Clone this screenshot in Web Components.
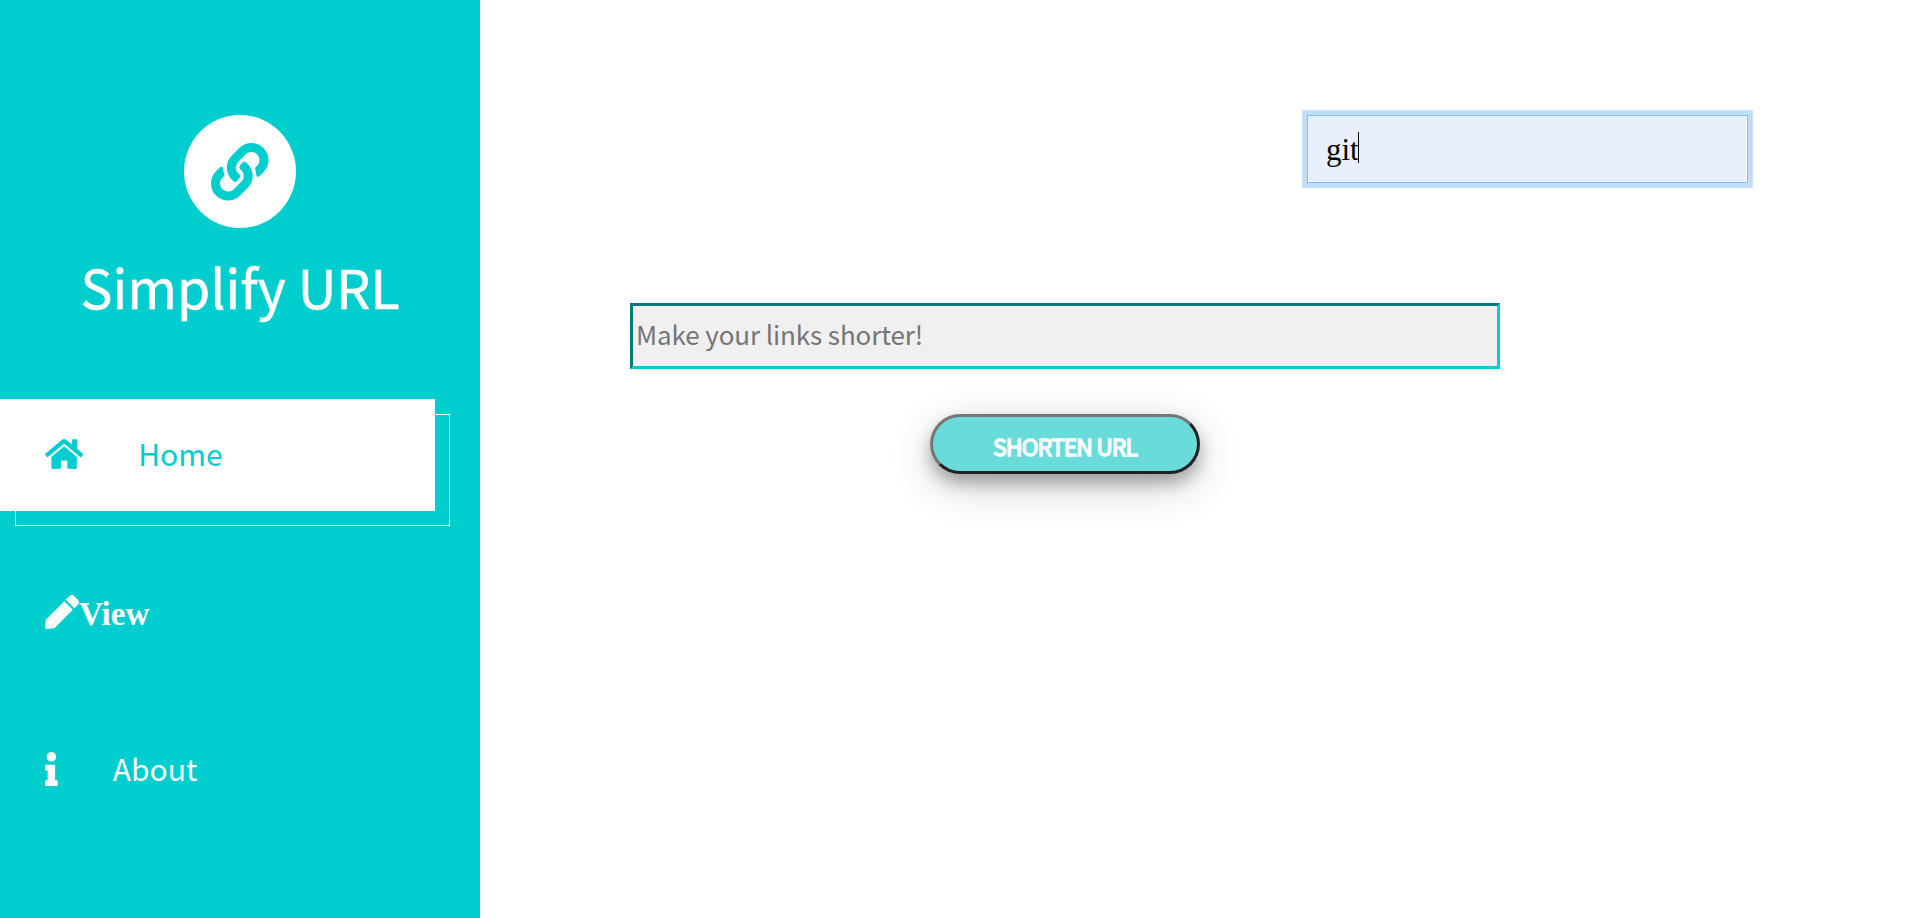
<!DOCTYPE html>
<html lang="en">
<head>
<meta charset="utf-8">
<title>Simplify URL</title>
<style>
html, body { margin: 0; height: 100%; }
body { background: #fff; overflow: hidden; font-family: "Noto Sans CJK SC", sans-serif; }
</style>
</head>
<body>
<url-app></url-app>
<script>
const ICONS = {
  link: [512, "M326.612 185.391c59.747 59.809 58.927 155.698.36 214.59-.11.12-.24.25-.36.37l-67.2 67.2c-59.27 59.27-155.699 59.262-214.96 0-59.27-59.26-59.27-155.7 0-214.96l37.106-37.106c9.84-9.84 26.786-3.3 27.294 10.606.648 17.722 3.826 35.527 9.69 52.721 1.986 5.822.567 12.262-3.783 16.612l-13.087 13.087c-28.026 28.026-28.905 73.66-1.155 101.96 28.024 28.579 74.086 28.749 102.325.51l67.2-67.19c28.191-28.191 28.073-73.757 0-101.83-3.701-3.694-7.429-6.564-10.341-8.569a16.037 16.037 0 0 1-6.947-12.606c-.396-10.567 3.348-21.456 11.698-29.806l21.054-21.055c5.521-5.521 14.182-6.199 20.584-1.731a152.482 152.482 0 0 1 20.522 17.197zM467.547 44.449c-59.261-59.262-155.69-59.27-214.96 0l-67.2 67.2c-.12.12-.25.25-.36.37-58.566 58.892-59.387 154.781.36 214.59a152.454 152.454 0 0 0 20.521 17.196c6.402 4.468 15.064 3.789 20.584-1.731l21.054-21.055c8.35-8.35 12.094-19.239 11.698-29.806a16.037 16.037 0 0 0-6.947-12.606c-2.912-2.005-6.64-4.875-10.341-8.569-28.073-28.073-28.191-73.639 0-101.83l67.2-67.19c28.239-28.239 74.3-28.069 102.325.51 27.75 28.3 26.872 73.934-1.155 101.96l-13.087 13.087c-4.35 4.35-5.769 10.79-3.783 16.612 5.864 17.194 9.042 34.999 9.69 52.721.509 13.906 17.454 20.446 27.294 10.606l37.106-37.106c59.271-59.259 59.271-155.699.001-214.959z"],
  home: [576, "M280.37 148.26L96 300.11V464a16 16 0 0 0 16 16l112.06-.29a16 16 0 0 0 15.92-16V368a16 16 0 0 1 16-16h64a16 16 0 0 1 16 16v95.64a16 16 0 0 0 16 16.05L464 480a16 16 0 0 0 16-16V300L295.67 148.26a12.19 12.19 0 0 0-15.3 0zM571.6 251.47L488 182.56V44.05a12 12 0 0 0-12-12h-56a12 12 0 0 0-12 12v72.61L318.47 43a48 48 0 0 0-61 0L4.34 251.47a12 12 0 0 0-1.6 16.9l25.5 31A12 12 0 0 0 45.15 301l235.22-193.74a12.19 12.19 0 0 1 15.3 0L530.9 301a12 12 0 0 0 16.9-1.6l25.5-31a12 12 0 0 0-1.7-16.93z"],
  pen: [512, "M290.74 93.24l128.02 128.02-277.99 277.99-114.14 12.6C11.35 513.54-1.56 500.62.14 485.34l12.7-114.22 277.9-277.88zm207.2-19.06l-60.11-60.11c-18.75-18.75-49.16-18.75-67.91 0l-56.55 56.55 128.02 128.02 56.55-56.55c18.75-18.76 18.75-49.16 0-67.91z"],
  info: [192, "M20 424.229h20V279.771H20c-11.046 0-20-8.954-20-20V212c0-11.046 8.954-20 20-20h112c11.046 0 20 8.954 20 20v212.229h20c11.046 0 20 8.954 20 20V492c0 11.046-8.954 20-20 20H20c-11.046 0-20-8.954-20-20v-47.771c0-11.046 8.954-20 20-20zM96 0C56.235 0 24 32.235 24 72s32.235 72 72 72 72-32.235 72-72S135.764 0 96 0z"]
};

const define = (name, html) => customElements.define(name, class extends HTMLElement {
  constructor() {
    super();
    this.attachShadow({ mode: "open" }).innerHTML = html;
  }
});

customElements.define("app-icon", class extends HTMLElement {
  connectedCallback() {
    const [w, d] = ICONS[this.getAttribute("name")];
    this.attachShadow({ mode: "open" }).innerHTML = `
      <style>:host { display: block; flex: none; height: 1em; } svg { display: block; height: 1em; width: ${w / 512}em; overflow: visible; }</style>
      <svg viewBox="0 0 ${w} 512" fill="currentColor"><path d="${d}"/></svg>`;
  }
});

define("brand-logo", `
  <style>
    :host { display: flex; flex-direction: column; align-items: center; padding-top: 115px; height: 399px; box-sizing: border-box; color: #fff; }
    .disc { flex: none; width: 112px; height: 113px; border-radius: 50%; background: #fff; color: #00cdcd; display: grid; place-items: center; font-size: 57.5px; }
    .name { font-size: 53.7px; line-height: 80px; margin-top: 18px; white-space: nowrap; -webkit-text-stroke: .5px #fff; }
  </style>
  <div class="disc"><app-icon name="link"></app-icon></div>
  <div class="name"><slot></slot></div>`);

define("nav-item", `
  <style>
    :host { display: flex; align-items: center; position: relative; box-sizing: border-box; width: 435px; height: 112px; padding-left: 45px; color: #fff; font-size: 30px; line-height: 44px; }
    :host([active]) { color: #00cdcd; background: #fff; padding-bottom: 2px; }
    :host([active])::before { content: ""; position: absolute; z-index: -1; left: 15px; top: 15px; width: 435px; height: 112px; box-sizing: border-box; border: 1px solid #fff; }
    .label { margin-left: 55px; padding-bottom: 2px; }
    :host([plain]) .label { margin-left: 0; padding: 4px 0 0; font: bold 33px/44px "Liberation Serif", serif; }
    ::slotted(app-icon) { font-size: 34px; }
  </style>
  <slot name="icon"></slot><span class="label"><slot></slot></span>`);

define("side-bar", `
  <style>
    :host { display: block; position: relative; z-index: 0; width: 480px; height: 100%; background: #00cdcd; }
    nav { display: flex; flex-direction: column; gap: 45px; }
  </style>
  <brand-logo>Simplify URL</brand-logo>
  <nav>
    <nav-item active><app-icon slot="icon" name="home"></app-icon>Home</nav-item>
    <nav-item plain><app-icon slot="icon" name="pen"></app-icon>View</nav-item>
    <nav-item><app-icon slot="icon" name="info"></app-icon>About</nav-item>
  </nav>`);

define("search-field", `
  <style>
    :host { display: flex; align-items: center; box-sizing: border-box; width: 441px; height: 68px; padding: 0 0 0 18px; border: 1px solid #80bdff; background: #e8f0fe; box-shadow: inset -1px -1px #fff, 0 0 0 4px #bfdeff, 0 0 0 5px #c8e3ff; font: 31px/34px "Liberation Serif", serif; color: #000; }
    span { padding-top: 2px; }
    i { width: 1px; height: 31px; background: #000; margin-top: -3px; margin-left: -.7px; }
  </style>
  <span><slot></slot></span><i></i>`);

define("url-field", `
  <style>
    :host { display: flex; align-items: center; box-sizing: border-box; width: 870px; height: 66px; padding: 0 3px 4px; border: 3px solid; border-color: #007b7b #00cdcd #00cdcd #007b7b; background: #f0f0f0; color: #757575; font-size: 26px; letter-spacing: -0.1px; line-height: 38px; }
  </style>
  <span><slot></slot></span>`);

define("shorten-button", `
  <style>
    :host { display: flex; align-items: center; justify-content: center; box-sizing: border-box; width: 270px; height: 60px; border: 3px solid; border-color: #767676 #212121 #212121 #767676; border-radius: 30px; background: #69dbda; color: #fff; font-size: 23px; line-height: 34px; box-shadow: 0 9px 16px rgba(0,0,0,.28), 0 12px 44px rgba(0,0,0,.19); }
    span { padding-top: 3px; letter-spacing: -.95px; -webkit-text-stroke: 1.3px #fff; }
  </style>
  <span><slot></slot></span>`);

define("url-app", `
  <style>
    :host { display: flex; height: 100%; }
    side-bar { flex: none; }
    main { flex: 1; display: flex; flex-direction: column; padding: 115px 169px 0 150px; }
    search-field { align-self: flex-end; }
    form { display: flex; flex-direction: column; align-items: center; align-self: flex-start; margin-top: 120px; gap: 45px; }
  </style>
  <side-bar></side-bar>
  <main>
    <search-field>git</search-field>
    <form>
      <url-field>Make your links shorter!</url-field>
      <shorten-button>SHORTEN URL</shorten-button>
    </form>
  </main>`);
</script>
</body>
</html>
